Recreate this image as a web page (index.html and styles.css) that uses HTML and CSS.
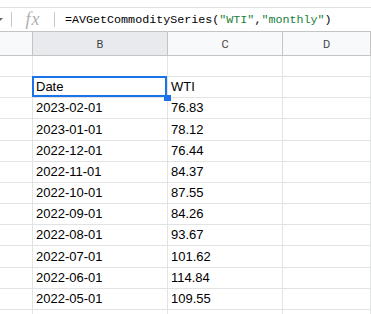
FILE: index.html
```html
<!DOCTYPE html>
<html>
<head>
<meta charset="utf-8">
<link rel="stylesheet" href="styles.css">
</head>
<body>
<div class="formula-bar">
  <span class="dropdown"></span>
  <span class="sep"></span>
  <span class="fx">fx</span>
  <span class="sep"></span>
  <span class="formula">=AVGetCommoditySeries(<span class="str">"WTI"</span>,<span class="str">"monthly"</span>)</span>
</div>
<div class="sheet">
  <div class="hdr"></div><div class="hdr sel">B</div><div class="hdr">C</div><div class="hdr">D</div>
  <div class="c"></div><div class="c"></div><div class="c"></div><div class="c"></div>
  <div class="c"></div><div class="c active">Date</div><div class="c">WTI</div><div class="c"></div>
  <div class="c"></div><div class="c">2023-02-01</div><div class="c">76.83</div><div class="c"></div>
  <div class="c"></div><div class="c">2023-01-01</div><div class="c">78.12</div><div class="c"></div>
  <div class="c"></div><div class="c">2022-12-01</div><div class="c">76.44</div><div class="c"></div>
  <div class="c"></div><div class="c">2022-11-01</div><div class="c">84.37</div><div class="c"></div>
  <div class="c"></div><div class="c">2022-10-01</div><div class="c">87.55</div><div class="c"></div>
  <div class="c"></div><div class="c">2022-09-01</div><div class="c">84.26</div><div class="c"></div>
  <div class="c"></div><div class="c">2022-08-01</div><div class="c">93.67</div><div class="c"></div>
  <div class="c"></div><div class="c">2022-07-01</div><div class="c">101.62</div><div class="c"></div>
  <div class="c"></div><div class="c">2022-06-01</div><div class="c">114.84</div><div class="c"></div>
  <div class="c"></div><div class="c">2022-05-01</div><div class="c">109.55</div><div class="c"></div>
  <div class="c"></div><div class="c">2022-04-01</div><div class="c">101.78</div><div class="c"></div>
</div>
</body>
</html>
```
FILE: styles.css
```css
html, body {
  margin: 0;
  padding: 0;
  overflow: hidden;
  background: #fff;
}
body {
  font-family: "Liberation Sans", Arial, sans-serif;
}
.formula-bar {
  margin-top: 7px;
  border-top: 1px solid #e1e1e1;
  height: 23px;
  display: flex;
  align-items: center;
}
.dropdown {
  width: 0;
  height: 0;
  margin-left: -5px;
  margin-top: 1px;
  border-left: 4px solid transparent;
  border-right: 4px solid transparent;
  border-top: 4px solid #5f6368;
}
.sep {
  width: 1px;
  height: 15px;
  background: #c7c7c7;
}
.dropdown + .sep {
  margin-left: 8px;
}
.fx {
  font-family: "Liberation Serif", serif;
  font-style: italic;
  font-size: 18px;
  color: #b0b0b0;
  width: 42px;
  text-align: center;
  letter-spacing: 1px;
  margin-top: -1px;
}
.formula {
  margin-left: 10px;
  font-family: "Liberation Mono", monospace;
  font-size: 11.7px;
  color: #000;
  white-space: nowrap;
}
.str {
  color: #188038;
}
.sheet {
  display: grid;
  grid-template-columns: 33px 135px 115px 1fr;
  grid-template-rows: 24px;
  grid-auto-rows: 21.17px;
  border-top: 1px solid #c4c4c4;
}
.hdr {
  background: #f8f9fa;
  border-right: 1px solid #c4c4c4;
  border-bottom: 1px solid #c4c4c4;
  box-sizing: border-box;
  font-family: Roboto, "Liberation Sans", sans-serif;
  font-size: 11px;
  color: #444;
  display: flex;
  align-items: center;
  justify-content: center;
  padding-top: 1px;
}
.hdr.sel {
  background: #e8eaed;
}
.c {
  box-sizing: border-box;
  border-right: 1px solid #e2e3e3;
  border-bottom: 1px solid #e2e3e3;
  font-size: 13px;
  line-height: 15px;
  color: #000;
  display: flex;
  align-items: flex-end;
  padding: 0 3px 3px 3px;
  white-space: nowrap;
  overflow: hidden;
}
.active {
  position: relative;
  overflow: visible;
}
.active::before {
  content: "";
  position: absolute;
  top: -1px;
  left: -1px;
  right: 0;
  bottom: 0;
  border: 2px solid #1a73e8;
}
.active::after {
  content: "";
  position: absolute;
  right: -4px;
  bottom: -4px;
  width: 7px;
  height: 6px;
  background: #1a73e8;
  z-index: 2;
}
```
